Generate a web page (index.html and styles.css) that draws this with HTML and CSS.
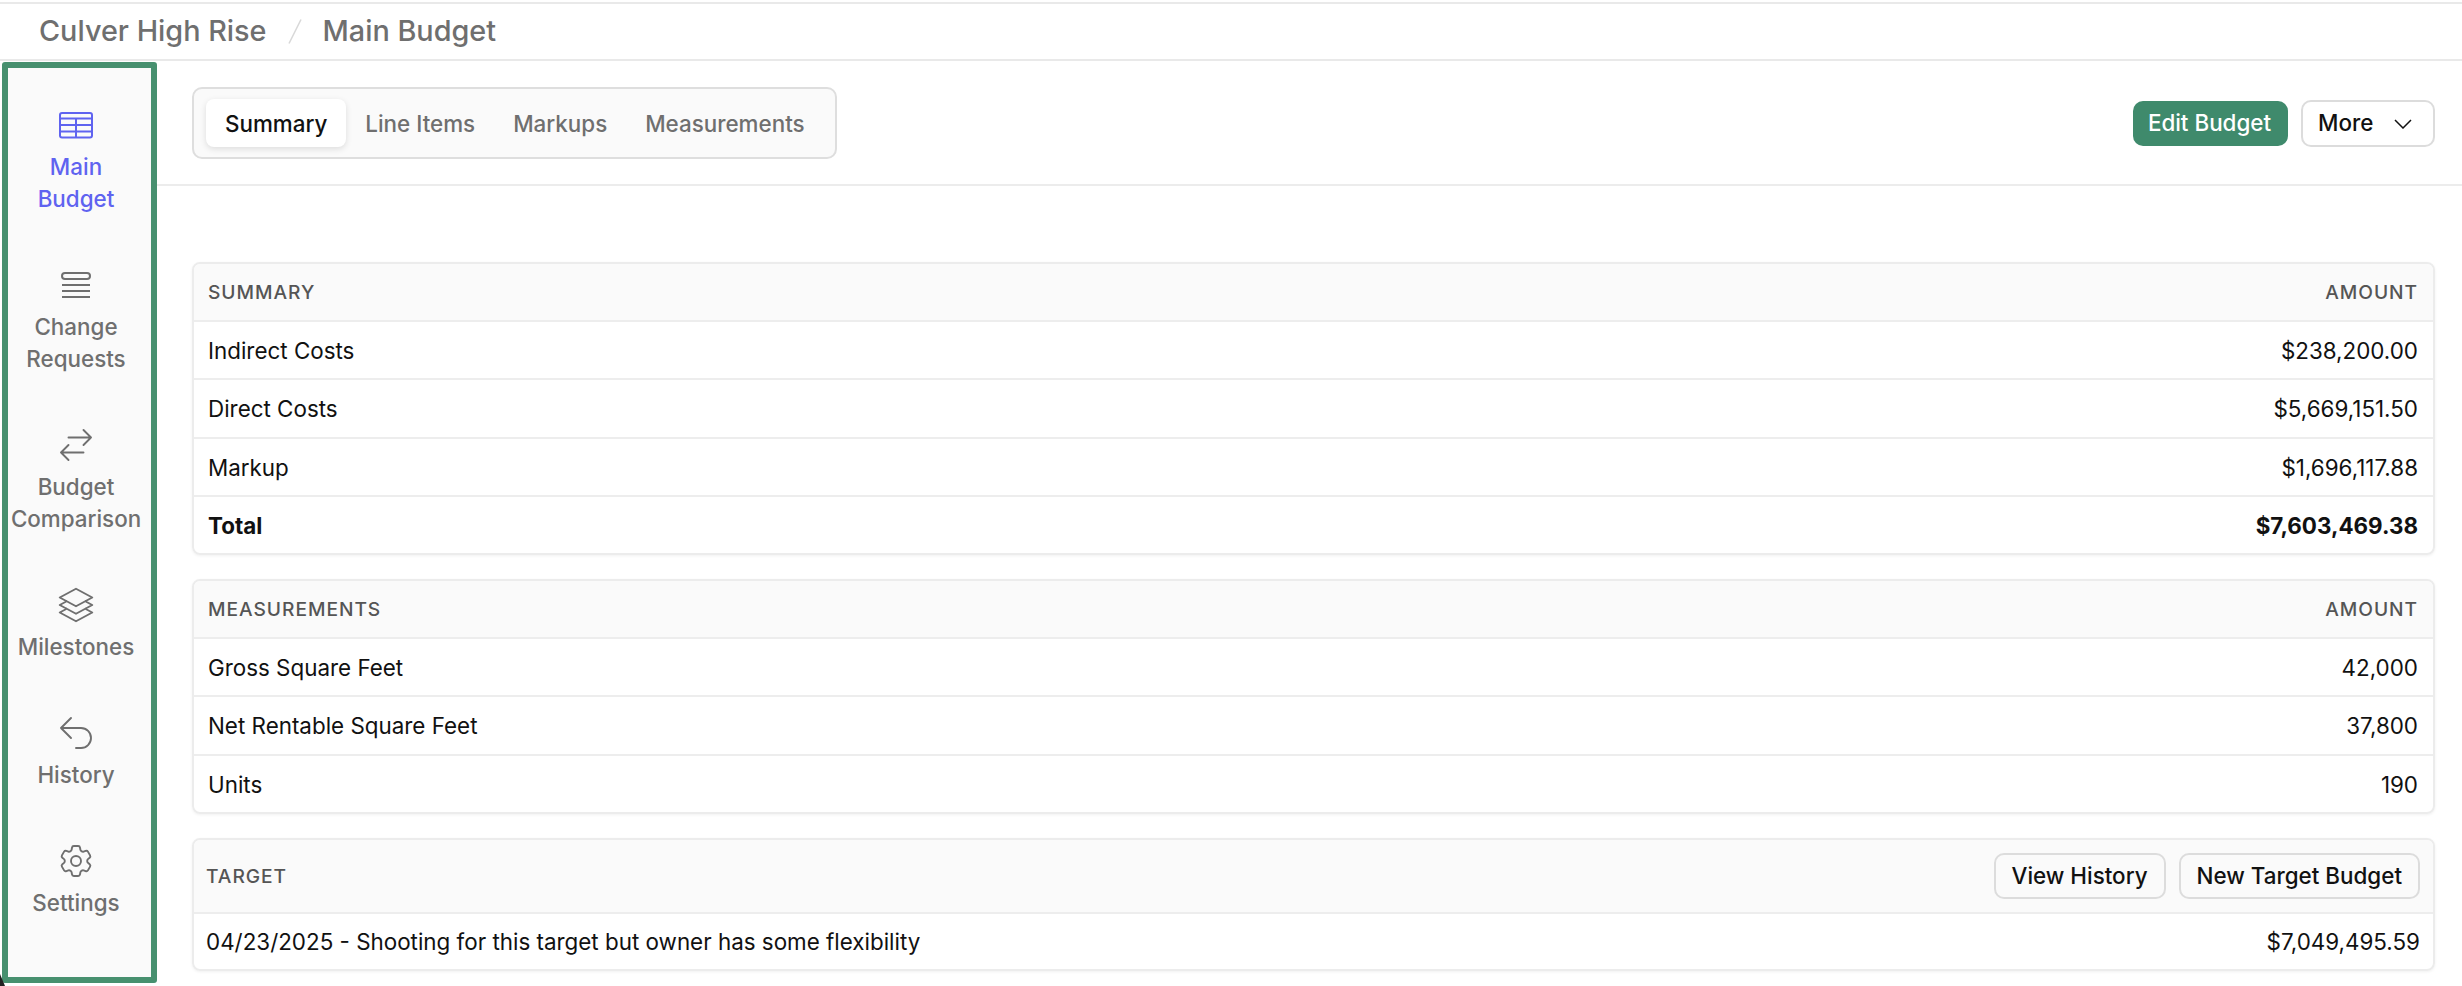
FILE: index.html
```html
<!DOCTYPE html>
<html lang="en">
<head>
<meta charset="utf-8">
<title>Main Budget</title>
<link rel="stylesheet" href="styles.css">
</head>
<body>
<header class="crumbs">
  <span>Culver High Rise</span>
  <svg class="slash" viewBox="0 0 14 25"><path d="M13 0.500 1 24.500"/></svg>
  <span>Main Budget</span>
</header>
<div class="shell">
  <nav class="side">
    <a class="nav active">
      <svg class="ico" viewBox="0 0 40 40"><rect x="4" y="8" width="32" height="24.500" rx="2"/><path d="M4 13.500h32M4 20h32M4 26.500h32M20 13.500v19"/></svg>
      <span>Main<br>Budget</span>
    </a>
    <a class="nav">
      <svg class="ico" viewBox="0 0 40 40"><rect x="6" y="8" width="28" height="6" rx="3"/><path d="M6 20h28M6 26h28M6 32h28"/></svg>
      <span>Change<br>Requests</span>
    </a>
    <a class="nav">
      <svg class="ico hero" viewBox="0 0 24 24"><path d="M7.500 21 3 16.500m0 0L7.500 12M3 16.500h13.500m0-13.500L21 7.500m0 0L16.500 12M21 7.500H7.500"/></svg>
      <span>Budget<br>Comparison</span>
    </a>
    <a class="nav">
      <svg class="ico hero" viewBox="0 0 24 24"><path d="M6.429 9.750 2.250 12l4.179 2.250m0-4.500 5.571 3 5.571-3m-11.142 0L2.250 7.500 12 2.250l9.750 5.250-4.179 2.250m0 0L21.750 12l-4.179 2.250m0 0 4.179 2.250L12 21.750 2.250 16.500l4.179-2.250m11.142 0-5.571 3-5.571-3"/></svg>
      <span>Milestones</span>
    </a>
    <a class="nav">
      <svg class="ico hero" viewBox="0 0 24 24"><path d="M9 15 3 9m0 0 6-6M3 9h12a6 6 0 0 1 0 12h-3"/></svg>
      <span>History</span>
    </a>
    <a class="nav">
      <svg class="ico hero" viewBox="0 0 24 24"><path d="M9.594 3.940c.09-.542.56-.94 1.110-.94h2.593c.55 0 1.020.398 1.110.94l.213 1.281c.063.374.313.686.645.870.074.04.147.083.22.127.325.196.72.257 1.075.124l1.217-.456a1.125 1.125 0 0 1 1.370.49l1.296 2.247a1.125 1.125 0 0 1-.26 1.431l-1.003.827c-.293.241-.438.613-.43.992a7.723 7.723 0 0 1 0 .255c-.008.378.137.75.43.991l1.004.827c.424.35.534.955.26 1.430l-1.298 2.247a1.125 1.125 0 0 1-1.369.491l-1.217-.456c-.355-.133-.75-.072-1.076.124a6.470 6.470 0 0 1-.22.128c-.331.183-.581.495-.644.869l-.213 1.281c-.09.543-.56.94-1.110.94h-2.594c-.55 0-1.019-.398-1.110-.94l-.213-1.281c-.062-.374-.312-.686-.644-.870a6.520 6.520 0 0 1-.22-.127c-.325-.196-.72-.257-1.076-.124l-1.217.456a1.125 1.125 0 0 1-1.369-.49l-1.297-2.247a1.125 1.125 0 0 1 .26-1.431l1.004-.827c.292-.24.437-.613.43-.991a6.932 6.932 0 0 1 0-.255c.007-.38-.138-.751-.43-.992l-1.004-.827a1.125 1.125 0 0 1-.26-1.430l1.297-2.247a1.125 1.125 0 0 1 1.370-.491l1.216.456c.356.133.751.072 1.076-.124.072-.044.146-.086.22-.128.332-.183.582-.495.644-.869l.214-1.280Z"/><path d="M15 12a3 3 0 1 1-6 0 3 3 0 0 1 6 0Z"/></svg>
      <span>Settings</span>
    </a>
  </nav>
  <main class="content">
    <div class="toolbar">
      <div class="tabs">
        <span class="tab on">Summary</span>
        <span class="tab">Line Items</span>
        <span class="tab">Markups</span>
        <span class="tab">Measurements</span>
      </div>
      <div class="actions">
        <button class="btn primary">Edit Budget</button>
        <button class="btn more">More
          <svg class="chev" viewBox="0 0 18 10"><path d="M1 1l8 8 8-8"/></svg>
        </button>
      </div>
    </div>
    <div class="cards">
      <section class="card">
        <div class="row head"><span>Summary</span><span>Amount</span></div>
        <div class="row"><span>Indirect Costs</span><span>$238,200.00</span></div>
        <div class="row"><span>Direct Costs</span><span>$5,669,151.50</span></div>
        <div class="row"><span>Markup</span><span>$1,696,117.88</span></div>
        <div class="row total"><span>Total</span><span>$7,603,469.38</span></div>
      </section>
      <section class="card">
        <div class="row head"><span>Measurements</span><span>Amount</span></div>
        <div class="row"><span>Gross Square Feet</span><span>42,000</span></div>
        <div class="row"><span>Net Rentable Square Feet</span><span>37,800</span></div>
        <div class="row"><span>Units</span><span>190</span></div>
      </section>
      <section class="card target">
        <div class="row head"><span>Target</span>
          <div class="head-btns">
            <button class="btn ghost">View History</button>
            <button class="btn ghost">New Target Budget</button>
          </div>
        </div>
        <div class="row"><span>04/23/2025 - Shooting for this target but owner has some flexibility</span><span>$7,049,495.59</span></div>
      </section>
    </div>
  </main>
</div>
<span class="corner"></span>
</body>
</html>
```
FILE: styles.css
```css
* { box-sizing: border-box; }
html, body { margin: 0; height: 100%; overflow: hidden; background: #fff; }
body { font-family: Inter, "Liberation Sans", sans-serif; font-size: 22.400px; color: #111; }

.crumbs {
  margin-top: 2px;
  height: 59px;
  padding: 0 38px 3px 39px;
  display: flex;
  align-items: center;
  gap: 21px;
  font-size: 28.800px;
  font-weight: 500;
  color: #6f6f6f;
  border-top: 2px solid #e9e9e9;
  border-bottom: 2px solid #e9e9e9;
}
.slash { width: 14px; height: 25px; fill: none; stroke: #d8d8d8; stroke-width: 1.500; margin-top: 3px; }

.shell { display: flex; align-items: flex-start; height: 925px; }

.side {
  flex: none;
  width: 155px;
  height: 921px;
  margin: 1px 0 0 2px;
  padding: 37px 7px 0 0;
  border: 6px solid #47906f;
  border-radius: 3px;
  background: #fafafa;
  display: flex;
  flex-direction: column;
  gap: 50px;
}
.nav {
  display: flex;
  flex-direction: column;
  align-items: center;
  gap: 6px;
  color: #6f6f6f;
  font-size: 22.400px;
  line-height: 32px;
  font-weight: 500;
  text-align: center;
}
.nav.active { color: #5f63f0; }
.ico { width: 40px; height: 40px; fill: none; stroke: currentColor; stroke-width: 2; display: block; }
.ico.hero { stroke-width: 1.150; stroke-linecap: round; stroke-linejoin: round; }

.content { flex: 1; min-width: 0; }
.toolbar {
  height: 125px;
  padding: 26px 27px 0 35px;
  display: flex;
  justify-content: space-between;
  align-items: flex-start;
  border-bottom: 2px solid #ececec;
}
.tabs {
  width: 645px;
  height: 72px;
  padding: 10px 12px;
  display: flex;
  align-items: stretch;
  border: 2px solid #dedede;
  border-radius: 10px;
  background: #fafafa;
}
.tab {
  flex: none;
  white-space: nowrap;
  display: flex;
  align-items: center;
  padding: 0 19px;
  font-weight: 500;
  color: #6f6f6f;
}
.tab.on {
  color: #111;
  background: #fff;
  border-radius: 8px;
  box-shadow: 0 2px 6px rgba(0,0,0,.12);
}

.actions { display: flex; gap: 13px; align-items: center; padding-top: 13px; }
.btn {
  font: 500 22.400px/1 Inter, "Liberation Sans", sans-serif;
  border-radius: 10px;
  height: 46px;
  padding: 0 16px;
  background: #fff;
  border: 2px solid #dcdcdc;
  color: #111;
}
.btn.primary { background: #3f8a6c; border: 0; color: #fff; width: 155px; height: 45px; padding: 0 2px 0 0; }
.btn.more {
  width: 134px;
  height: 47px;
  display: flex;
  align-items: center;
  justify-content: space-between;
  padding: 0 21px 0 15px;
}
.chev { width: 18px; height: 10px; fill: none; stroke: #111; stroke-width: 1.500; }

.cards {
  padding: 76px 27px 0 35px;
  display: flex;
  flex-direction: column;
  gap: 24px;
}
.card {
  border: 2px solid #ececec;
  border-radius: 8px;
  box-shadow: 0 1px 3px rgba(0,0,0,.06);
  overflow: hidden;
}
.row {
  height: 58.250px;
  padding: 1px 15px 0 14px;
  display: flex;
  align-items: center;
  justify-content: space-between;
  border-top: 2px solid #ededed;
}
.row.head {
  height: 56px;
  padding-top: 0;
  border-top: 0;
  background: #fafafa;
  font-size: 19.200px;
  font-weight: 500;
  letter-spacing: .05em;
  text-transform: uppercase;
  color: #555;
}
.target .row { height: 57px; padding: 1px 13px 0 12px; }
.target .row.head { height: 72px; padding-top: 0; }
.row.total { font-weight: 700; }
.head-btns { display: flex; gap: 13px; letter-spacing: 0; text-transform: none; }
.btn.ghost { background: #fafafa; padding: 0 16px; }

.corner {
  position: absolute;
  left: 0;
  bottom: 0;
  width: 5px;
  height: 12px;
  background: #222;
  clip-path: polygon(0 0, 100% 100%, 0 100%);
}
```
